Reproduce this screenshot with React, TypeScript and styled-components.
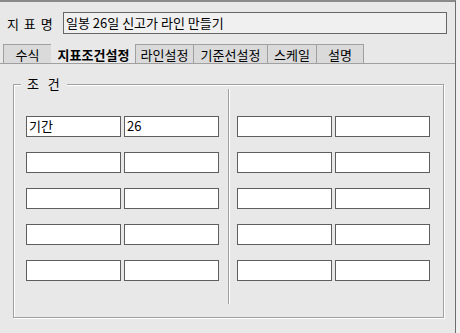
import React from 'react';
import styled, { createGlobalStyle } from 'styled-components';

const Global = createGlobalStyle`
  html, body {
    margin: 0;
    padding: 0;
    background: #f0f0f0;
  }
  body {
    font-family: "Noto Sans CJK KR", "Noto Sans", sans-serif;
    font-size: 12px;
    color: #000;
  }
`;

const Page = styled.div`
  width: 460px;
  height: 333px;
  display: flex;
  overflow: hidden;
  background: #f0f0f0;
`;

const Panel = styled.div`
  width: 456px;
  height: 333px;
  box-sizing: border-box;
  background: #e8e8e8;
  border-top: 2px solid #8a8a8a;
  border-right: 1px solid #6e6e6e;
  display: flex;
  flex-direction: column;
`;

const NameRow = styled.div`
  display: flex;
  align-items: center;
  padding: 10px 0 0 7px;
  height: 22px;
`;

const NameLabel = styled.span`
  width: 56px;
  font-size: 13px;
  word-spacing: 2px;
`;

const NameInput = styled.div`
  width: 384px;
  height: 22px;
  box-sizing: border-box;
  border: 1px solid #666;
  background: #f0f0f0;
  font-size: 13px;
  line-height: 19px;
  padding-left: 2px;
  white-space: nowrap;
`;

const TabBar = styled.div`
  display: flex;
  margin-top: 10px;
  padding-left: 3px;
  height: 19px;
  border-bottom: 1px solid #a0a0a0;
`;

const Tab = styled.div<{ $active?: boolean; $w: number }>`
  width: ${p => p.$w}px;
  box-sizing: border-box;
  display: flex;
  align-items: center;
  justify-content: center;
  font-size: 13px;
  font-weight: ${p => (p.$active ? 700 : 400)};
  background: ${p => (p.$active ? '#e8e8e8' : '#dadada')};
  border: 1px solid ${p => (p.$active ? 'transparent' : '#a0a0a0')};
  border-bottom: none;
  margin-left: -1px;
  &:first-child {
    margin-left: 0;
  }
`;

const Group = styled.div`
  position: relative;
  margin: 20px 0 0 13px;
  width: 431px;
  height: 234px;
  box-sizing: border-box;
  border: 1px solid #a0a0a0;
  box-shadow: inset 1px 1px 0 #fff, 1px 1px 0 #fff;
  display: flex;
  padding: 31px 0 0 12px;
`;

const GroupTitle = styled.span`
  position: absolute;
  top: -9px;
  left: 7px;
  padding: 0 7px 0 6px;
  background: #e8e8e8;
  font-size: 13px;
  line-height: 16px;
  word-spacing: 6px;
`;

const FieldGrid = styled.div`
  display: grid;
  grid-template-columns: 95px 95px;
  grid-auto-rows: 21px;
  column-gap: 3px;
  row-gap: 15px;
  align-content: start;
`;

const Divider = styled.div`
  width: 1px;
  margin: -27px 8px 0 9px;
  height: 215px;
  background: #a0a0a0;
  box-shadow: 1px 0 0 #fff;
  flex-shrink: 0;
`;

const Field = styled.div`
  box-sizing: border-box;
  border: 1px solid #5e5e5e;
  background: #fff;
  font-size: 13px;
  line-height: 18px;
  padding-left: 2px;
  white-space: nowrap;
`;

const tabs: { label: string; w: number; active?: boolean }[] = [
  { label: '수식', w: 49 },
  { label: '지표조건설정', w: 85, active: true },
  { label: '라인설정', w: 59 },
  { label: '기준선설정', w: 75 },
  { label: '스케일', w: 50 },
  { label: '설명', w: 48 },
];

const leftValues = ['기간', '26', '', '', '', '', '', '', '', ''];
const rightValues = Array(10).fill('');

export default function App() {
  return (
    <Page>
      <Global />
      <Panel>
        <NameRow>
          <NameLabel>지 표 명</NameLabel>
          <NameInput>일봉 26일 신고가 라인 만들기</NameInput>
        </NameRow>
        <TabBar>
          {tabs.map(t => (
            <Tab key={t.label} $w={t.w} $active={t.active}>
              {t.label}
            </Tab>
          ))}
        </TabBar>
        <Group>
          <GroupTitle>조 건</GroupTitle>
          <FieldGrid>
            {leftValues.map((v, i) => (
              <Field key={i}>{v}</Field>
            ))}
          </FieldGrid>
          <Divider />
          <FieldGrid>
            {rightValues.map((v, i) => (
              <Field key={i}>{v}</Field>
            ))}
          </FieldGrid>
        </Group>
      </Panel>
    </Page>
  );
}
